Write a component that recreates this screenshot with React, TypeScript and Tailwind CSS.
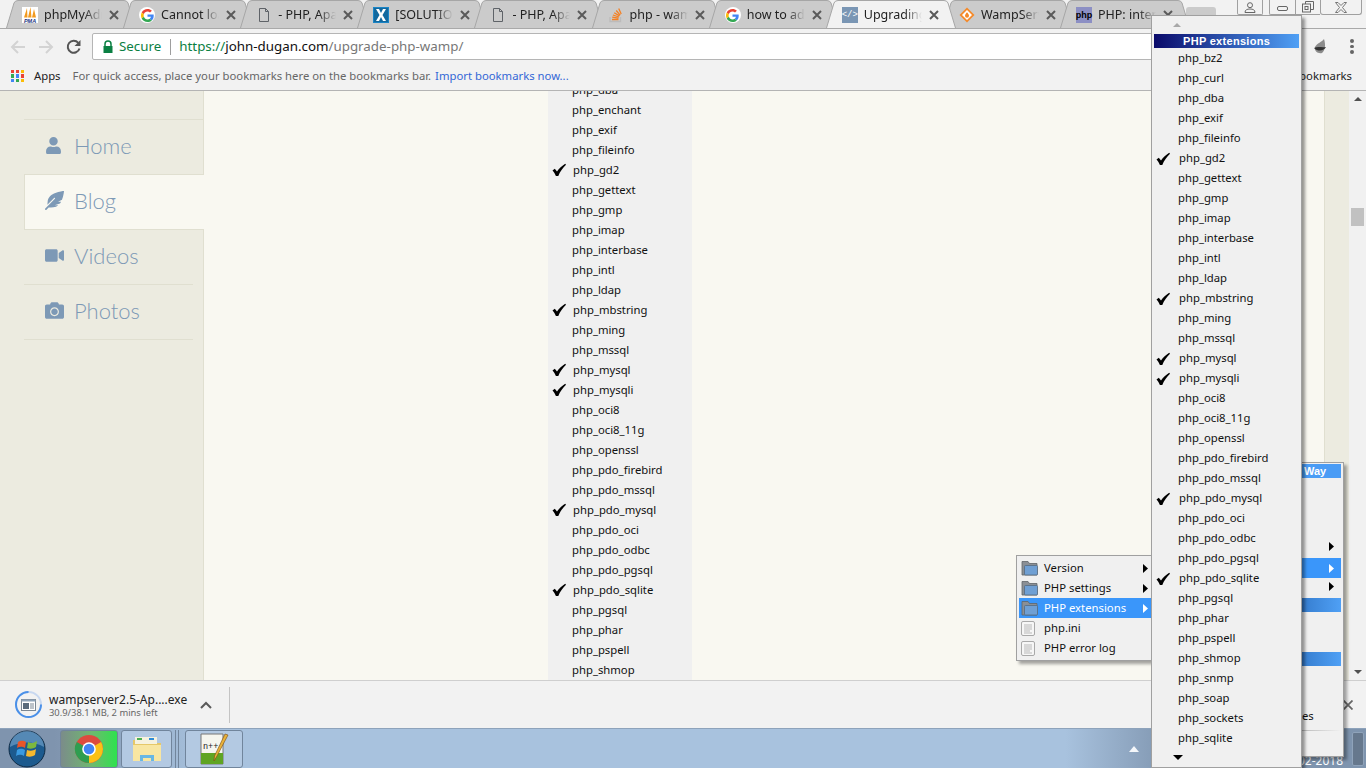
import { FaUser, FaFeatherAlt, FaVideo, FaCamera } from "react-icons/fa";
import { ReactNode } from "react";

const checked = ["php_gd2", "php_mbstring", "php_mysql", "php_mysqli", "php_pdo_mysql", "php_pdo_sqlite"];

const pageList = ["php_dba", "php_enchant", "php_exif", "php_fileinfo", "php_gd2", "php_gettext", "php_gmp", "php_imap", "php_interbase", "php_intl", "php_ldap", "php_mbstring", "php_ming", "php_mssql", "php_mysql", "php_mysqli", "php_oci8", "php_oci8_11g", "php_openssl", "php_pdo_firebird", "php_pdo_mssql", "php_pdo_mysql", "php_pdo_oci", "php_pdo_odbc", "php_pdo_pgsql", "php_pdo_sqlite", "php_pgsql", "php_phar", "php_pspell", "php_shmop"];

const menuList = ["php_bz2", "php_curl", "php_dba", "php_exif", "php_fileinfo", "php_gd2", "php_gettext", "php_gmp", "php_imap", "php_interbase", "php_intl", "php_ldap", "php_mbstring", "php_ming", "php_mssql", "php_mysql", "php_mysqli", "php_oci8", "php_oci8_11g", "php_openssl", "php_pdo_firebird", "php_pdo_mssql", "php_pdo_mysql", "php_pdo_oci", "php_pdo_odbc", "php_pdo_pgsql", "php_pdo_sqlite", "php_pgsql", "php_phar", "php_pspell", "php_shmop", "php_snmp", "php_soap", "php_sockets", "php_sqlite"];

function Tick() {
  return (
    <svg width="14" height="14" viewBox="0 0 14 14" className="shrink-0">
      <path d="M.5 7.500 L2.800 5.800 L5 8.600 C7 5.500 10 2.800 13.200 .8 L14 1.800 C10.800 4.800 8 8.800 6.300 13 L3.900 13 C3 10.800 2 9 .5 7.500 Z" fill="#000" />
    </svg>
  );
}

function GoogleIcon() {
  return (
    <div className="w-[16px] h-[16px] rounded-full bg-white flex items-center justify-center">
      <svg width="13" height="13" viewBox="0 0 48 48">
        <path fill="#EA4335" d="M24 9.500c3.500 0 6.700 1.200 9.200 3.600l6.900-6.900C35.900 2.400 30.500 0 24 0 14.600 0 6.500 5.400 2.600 13.200l8 6.200C12.500 13.600 17.800 9.500 24 9.500z" />
        <path fill="#4285F4" d="M46.900 24.500c0-1.600-.1-3.100-.4-4.500H24v9h12.900c-.6 3-2.200 5.500-4.700 7.200l7.700 6c4.500-4.200 7-10.300 7-17.700z" />
        <path fill="#FBBC05" d="M10.600 28.600c-.5-1.400-.8-3-.8-4.600s.3-3.200.8-4.600l-8-6.200C.9 16.500 0 20.100 0 24s.9 7.500 2.600 10.800l8-6.200z" />
        <path fill="#34A853" d="M24 48c6.500 0 11.900-2.100 15.900-5.800l-7.700-6c-2.100 1.400-4.900 2.300-8.200 2.300-6.200 0-11.500-4.200-13.400-9.800l-8 6.200C6.500 42.600 14.600 48 24 48z" />
      </svg>
    </div>
  );
}

function PageIcon() {
  return (
    <svg width="16" height="16" viewBox="0 0 16 16" fill="none">
      <path d="M3.500 1.500h6l3 3v10h-9z M9.500 1.500v3h3" stroke="#5f6368" strokeWidth="1" />
    </svg>
  );
}

function PmaIcon() {
  return (
    <svg width="16" height="16" viewBox="0 0 16 16">
      <rect width="16" height="16" fill="#fff" />
      <path d="M2 10.500 L5 1 L5.500 10.500 Z M6 10.500 L8.500 0 L9.500 10.500 Z M10 10.500 L12 2 L14 10.500 Z" fill="#f29a1f" />
      <text x="8" y="15.500" textAnchor="middle" fontSize="5.500" fontWeight="bold" fontStyle="italic" fill="#24357f" fontFamily="Liberation Sans, sans-serif">PMA</text>
    </svg>
  );
}

function SolutionIcon() {
  return (
    <svg width="16" height="16" viewBox="0 0 16 16">
      <rect width="16" height="16" fill="#1b85c6" />
      <rect x="1" y="1" width="14" height="14" fill="#12699f" />
      <path d="M3 2h3l2 4 2-4h3L9.500 8 13 14h-3L8 10l-2 4H3l3.500-6z" fill="#fff" />
    </svg>
  );
}

function StackIcon() {
  return (
    <svg width="16" height="16" viewBox="0 0 16 16" fill="none">
      <path d="M2 10v4.500h10.500V10" stroke="#bcbbbb" strokeWidth="1.300" />
      <path d="M4 12.500h6.500 M4.200 10.200l6.300.9 M4.900 8l6 2 M6.200 5.700l5.300 3.200 M8.200 3.500l4 4.700 M10.700 1.500l2.500 5.600" stroke="#f48024" strokeWidth="1.300" />
    </svg>
  );
}

function CodeIcon() {
  return (
    <div className="w-[16px] h-[16px] bg-[#7a96b4] flex items-center justify-center text-white text-[9px] leading-none font-['Liberation_Mono',monospace]">
      &lt;/&gt;
    </div>
  );
}

function WampIcon() {
  return (
    <svg width="16" height="16" viewBox="0 0 16 16">
      <path d="M8 .5 15.500 8 8 15.500 .5 8z" fill="#f58a2a" />
      <path d="M8 3 13 8 8 13 3 8z" fill="#fff" />
      <path d="M8 5.200c1.300 1.500 2 2.500 2 3.500a2 2 0 0 1-4 0c0-1 .7-2 2-3.500z" fill="#f58a2a" />
    </svg>
  );
}

function PhpIcon() {
  return (
    <div className="w-[16px] h-[16px] bg-[#8c8fc4] flex items-center justify-center text-black text-[9px] leading-none font-['Liberation_Sans',sans-serif] font-bold">
      php
    </div>
  );
}

const tabs: { icon: ReactNode; title: string; active?: boolean }[] = [
  { icon: <PmaIcon />, title: "phpMyAdmin" },
  { icon: <GoogleIcon />, title: "Cannot load" },
  { icon: <PageIcon />, title: "- PHP, Apache" },
  { icon: <SolutionIcon />, title: "[SOLUTION]" },
  { icon: <PageIcon />, title: "- PHP, Apache" },
  { icon: <StackIcon />, title: "php - wamp" },
  { icon: <GoogleIcon />, title: "how to add" },
  { icon: <CodeIcon />, title: "Upgrading PHP", active: true },
  { icon: <WampIcon />, title: "WampServer" },
  { icon: <PhpIcon />, title: "PHP: internal" },
];

function Tab({ icon, title, active }: { icon: ReactNode; title: string; active?: boolean }) {
  return (
    <div className={`relative h-[28px] w-[130px] mr-[-12.9px] shrink-0 flex items-center pl-[16px] pt-[2px] ${active ? "z-10" : ""}`}>
      <svg className="absolute inset-0" width="130" height="28" viewBox="0 0 130 28">
        <path d="M0.500 28 L8 3 Q9 .500 12 .500 L118 .500 Q121 .500 122 3 L129.500 28" fill={active ? "#f2f2f2" : "#cbcbcb"} stroke="#a6a6a6" />
      </svg>
      <div className="relative w-[16px] h-[16px] shrink-0">{icon}</div>
      <div className="relative ml-[6px] w-[58px] overflow-hidden whitespace-nowrap text-[12.5px] text-[#222] [mask-image:linear-gradient(to_right,black_70%,transparent)]">
        {title}
      </div>
      <svg className="relative ml-[7px]" width="10" height="10" viewBox="0 0 10 10">
        <path d="M1 1 L9 9 M9 1 L1 9" stroke="#5a5a5a" strokeWidth="2" />
      </svg>
    </div>
  );
}

function AppsGrid() {
  const colors = ["#ea4335", "#ea4335", "#fbbc05", "#34a853", "#4285f4", "#ea4335", "#4285f4", "#34a853", "#fbbc05"];
  return (
    <div className="grid grid-cols-3 gap-[1.500px] w-[13px]">
      {colors.map((c, i) => (
        <div key={i} className="w-[3.330px] h-[3.330px]" style={{ background: c }} />
      ))}
    </div>
  );
}

function FolderIcon() {
  return (
    <svg width="17" height="16" viewBox="0 0 17 16">
      <path d="M1 1.500 h6 l1.500 2 H16 V15 H1 z" fill="#8a8f95" stroke="#5f6468" strokeWidth=".8" />
      <rect x="3.500" y="5.500" width="13" height="9.500" rx="1" fill="#6f9fd3" stroke="#56697f" strokeWidth=".8" />
    </svg>
  );
}

function DocIcon() {
  return (
    <svg width="14" height="15" viewBox="0 0 14 15">
      <rect x=".5" y=".5" width="13" height="14" rx="1.500" fill="#f6f6f6" stroke="#a9a9a9" />
      <path d="M3 4h8 M3 6h8 M3 8h8 M3 10h6 M3 12h8" stroke="#b9b9b9" />
    </svg>
  );
}

function Arrow({ color = "#000" }: { color?: string }) {
  return (
    <svg width="5" height="9" viewBox="0 0 5 9">
      <path d="M0 0 L5 4.500 L0 9 Z" fill={color} />
    </svg>
  );
}

function LeftMenuRow({ icon, label, arrow, active }: { icon: ReactNode; label: string; arrow?: boolean; active?: boolean }) {
  return (
    <div className={`h-[20px] flex items-center pl-[2px] pr-[3px] ${active ? "bg-[#3a96fa] text-white" : "text-[#111]"}`}>
      <div className="w-[23px] flex items-center justify-start shrink-0">{icon}</div>
      <span className="flex-1">{label}</span>
      {arrow && <Arrow color={active ? "#fff" : "#000"} />}
    </div>
  );
}

function PhpRow({ name, left }: { name: string; left: string }) {
  const on = checked.includes(name);
  return (
    <div className="h-[20px] flex items-center text-[#111] whitespace-nowrap">
      <div className={`${left} shrink-0 pl-[4px] flex items-center`}>{on && <Tick />}</div>
      <span className={on ? "ml-[1px]" : ""}>{name}</span>
    </div>
  );
}

const navItems = [
  { icon: <FaUser size={17} />, label: "Home" },
  { icon: <FaFeatherAlt size={19} />, label: "Blog", active: true },
  { icon: <FaVideo size={19} />, label: "Videos" },
  { icon: <FaCamera size={19} />, label: "Photos" },
];

export default function App() {
  return (
    <div className="relative w-[1366px] h-[768px] overflow-hidden flex flex-col bg-[#f2f2f2] font-['Noto_Sans',sans-serif]">
      {/* tab strip */}
      <div className="relative h-[29px] shrink-0 flex pl-[6px] border-b border-[#a9a9a9]">
        {tabs.map((t, i) => (
          <Tab key={i} {...t} />
        ))}
        <div className="ml-[9px] mt-[7px] w-[30px] h-[21px] bg-[#cbcbcb] rounded-t-[3px]" />
        <div className="ml-auto flex h-[15px] items-start">
          <div className="w-[26px] h-[15px] border-x border-b border-[#a0a0a0] rounded-b-[2px] flex items-center justify-center mr-[6px]">
            <svg width="12" height="11" viewBox="0 0 12 11" fill="none">
              <circle cx="6" cy="3.200" r="2.500" stroke="#666" />
              <path d="M1 10.500 C1 7.800 3 7 6 7 C9 7 11 7.800 11 10.500 Z" stroke="#666" />
            </svg>
          </div>
          <div className="w-[26px] h-[15px] border-l border-b border-[#a0a0a0] rounded-bl-[2px] flex items-center justify-center">
            <div className="w-[11px] h-[5px] mt-[3px] border border-[#666] rounded-[2px]" />
          </div>
          <div className="w-[25px] h-[15px] border-l border-b border-[#a0a0a0] flex items-center justify-center">
            <svg width="12" height="12" viewBox="0 0 12 12" fill="none">
              <path d="M3.500 3V.5h8v8H9" stroke="#666" />
              <rect x=".5" y="3" width="8" height="8" stroke="#666" />
              <rect x="3" y="5.500" width="3" height="3" stroke="#666" />
            </svg>
          </div>
          <div className="w-[42px] h-[15px] mr-[4px] border-x border-b border-[#a0a0a0] rounded-b-[3px] flex items-center justify-center">
            <svg width="12" height="11" viewBox="0 0 12 11" fill="none">
              <path d="M.5 .5h2.500L6 3.500 9 .5h2.500L7.500 5.500l4 5H9L6 7.500 3 10.500H.5l4-5z" stroke="#777" fill="#f2f2f2" />
            </svg>
          </div>
        </div>
      </div>

      {/* toolbar */}
      <div className="h-[33px] shrink-0 flex items-center pl-[10px] pt-[2px]">
        <svg width="16" height="16" viewBox="0 0 16 16" fill="none" className="mr-[12px]">
          <path d="M15 8H2 M8 2 L2 8 L8 14" stroke="#d3d3d3" strokeWidth="2" />
        </svg>
        <svg width="16" height="16" viewBox="0 0 16 16" fill="none" className="mr-[12px]">
          <path d="M1 8H14 M8 2 L14 8 L8 14" stroke="#d3d3d3" strokeWidth="2" />
        </svg>
        <svg width="16" height="16" viewBox="0 0 16 16" fill="none" className="mr-[10px]">
          <path d="M13.500 9.500A6 6 0 1 1 12.300 3.800" stroke="#555" strokeWidth="2" />
          <path d="M14.500 1v6h-6z" fill="#555" />
        </svg>
        <div className="h-[27px] w-[1204px] bg-white border border-[#b5b5b5] rounded-[2px] flex items-center pl-[9px] text-[13.35px] whitespace-nowrap">
          <svg width="12" height="14" viewBox="0 0 12 14" className="mr-[5px]">
            <path d="M3 6V4a3 3 0 0 1 6 0v2" fill="none" stroke="#0b8043" strokeWidth="1.500" />
            <rect x="1.500" y="6" width="9" height="7" fill="#0b8043" />
          </svg>
          <span className="text-[#0b8043]">Secure</span>
          <div className="w-px h-[16px] bg-[#9e9e9e] ml-[9px] mr-[8px]" />
          <span className="text-[#0b8043]">https://</span>
          <span className="text-[#111]">john-dugan.com</span>
          <span className="text-[#777]">/upgrade-php-wamp/</span>
        </div>
        <svg width="20" height="20" viewBox="0 0 20 20" className="ml-[14px]">
          <path d="M14 2 C12 5 7 6 5 10 C4 14 8 17 12 16 C15 14 16 8 14 2 Z" fill="#8c8c8c" />
          <path d="M4 11 C8 9 12 11 16 10 C14 14 8 15 4 11 Z" fill="#333" />
        </svg>
        <div className="ml-[20px] flex flex-col gap-[2px]">
          <div className="w-[3.500px] h-[3.500px] rounded-full bg-[#666]" />
          <div className="w-[3.500px] h-[3.500px] rounded-full bg-[#666]" />
          <div className="w-[3.500px] h-[3.500px] rounded-full bg-[#666]" />
        </div>
      </div>

      {/* bookmarks bar */}
      <div className="h-[29px] shrink-0 flex items-center pl-[11px] pr-[14px] text-[11.3px] border-b border-[#b4b4b4] whitespace-nowrap">
        <AppsGrid />
        <span className="ml-[10px] text-[#222]">Apps</span>
        <span className="ml-[12px] text-[#666]">For quick access, place your bookmarks here on the bookmarks bar.</span>
        <span className="ml-[4px] text-[#3367d6]">Import bookmarks now...</span>
        <span className="ml-auto text-[#222]">Other bookmarks</span>
      </div>

      {/* page */}
      <div className="flex-1 min-h-0 flex bg-[#f9f8f1] overflow-hidden">
        <div className="w-[204px] shrink-0 bg-[#ecebe0] border-r border-[#e0dfd0] pl-[24px] pt-[28px]">
          <div className="border-t border-[#e0dfd0]">
            {navItems.map((n) => (
              <div
                key={n.label}
                className={`flex items-center pb-[3px] text-[#7d99b6] text-[22px] font-['Lato',sans-serif] font-light ${
                  n.active
                    ? "h-[56px] mt-[-1px] pl-[20px] w-[180px] bg-[#f9f8f1] border-l border-y border-[#e0dfd0]"
                    : "h-[55px] pl-[21px] w-[169px] border-b border-[#e0dfd0]"
                }`}
              >
                <div className="w-[29px] shrink-0">{n.icon}</div>
                <span>{n.label}</span>
              </div>
            ))}
          </div>
        </div>

        <div className="ml-[344px] w-[144px] h-full overflow-hidden bg-[#f0f0f0] text-[11.3px]">
          <div className="mt-[-11px]">
            {pageList.map((p) => (
              <PhpRow key={p} name={p} left="w-[24px]" />
            ))}
          </div>
        </div>

        <div className="ml-auto w-[25px] bg-[#ecebe0] border-l border-[#e0dfd0]" />
        <div className="relative w-[17px] bg-[#f1f1f1] flex flex-col items-center justify-between py-[6px]">
          <div className="w-0 h-0 border-x-[4px] border-x-transparent border-b-[4px] border-b-[#505050]" />
          <div className="absolute top-[117px] left-[2px] w-[13px] h-[18px] bg-[#c1c1c1]" />
          <div className="w-0 h-0 border-x-[4px] border-x-transparent border-t-[4px] border-t-[#505050]" />
        </div>
      </div>

      {/* download shelf */}
      <div className="h-[48px] shrink-0 flex items-center bg-[#f2f2f2] border-t border-[#cfcfcf] pl-[15px] pr-[13px]">
        <div className="relative w-[27px] h-[27px] rounded-full border-[2px] border-[#c8d8f0] flex items-center justify-center">
          <svg className="absolute -inset-[2px]" width="27" height="27" viewBox="0 0 27 27" fill="none">
            <path d="M13.500 1 A12.500 12.500 0 1 0 26 13.500" stroke="#4a90e8" strokeWidth="2" />
          </svg>
          <svg width="15" height="12" viewBox="0 0 15 12">
            <rect x=".5" y=".5" width="14" height="11" fill="#fff" stroke="#7a8794" />
            <rect x=".5" y=".5" width="14" height="2" fill="#8fa3b8" />
            <rect x="2" y="4" width="6" height="6" fill="#5a6b7c" />
            <path d="M9 5h4 M9 7h4 M9 9h4" stroke="#7a8794" />
          </svg>
        </div>
        <div className="ml-[7px] w-[146px] whitespace-nowrap pt-[3px]">
          <div className="text-[12px] leading-[14px] text-[#222]">wampserver2.5-Ap....exe</div>
          <div className="text-[9.4px] leading-[12px] text-[#666]">30.9/38.1 MB, 2 mins left</div>
        </div>
        <svg width="12" height="8" viewBox="0 0 12 8" fill="none" className="ml-[5px]">
          <path d="M1 7 L6 2 L11 7" stroke="#5a5a5a" strokeWidth="2" />
        </svg>
        <div className="ml-[17px] w-px h-[36px] bg-[#c4c4c4]" />
        <svg width="10" height="10" viewBox="0 0 10 10" className="ml-auto">
          <path d="M.5 .5 L9.500 9.500 M9.500 .5 L.5 9.500" stroke="#666" strokeWidth="1.800" />
        </svg>
      </div>

      {/* taskbar */}
      <div className="h-[40px] shrink-0 flex items-center bg-[linear-gradient(to_right,#7f94ae_0%,#7f94ae_4%,#a8c2de_15%,#a8c2de_78%,#7e94ae_86%,#7e94ae_100%)] border-t border-[#8ea3bb]">
        <div className="w-[60px] pl-[8px]">
          <svg width="38" height="38" viewBox="0 0 38 38">
            <circle cx="19" cy="19" r="18" fill="#1c5a8e" stroke="#0e2a44" />
            <path d="M2 17 A17 16 0 0 1 36 17 C26 11 12 11 2 17 Z" fill="#9cc4e4" opacity=".45" />
            <path d="M10 12 C13 10 16 11 18 12 L17 18 C15 17 12 16 9 18 Z" fill="#e8562a" />
            <path d="M20 12 C23 14 26 13 29 11 L28 17 C25 19 22 19 19 18 Z" fill="#7cb83e" />
            <path d="M9 20 C12 18 15 19 17 20 L16 26 C14 25 11 24 8 26 Z" fill="#3a9ae0" />
            <path d="M19 20 C22 21 25 21 28 19 L27 25 C24 27 21 27 18 26 Z" fill="#f5b82e" />
          </svg>
        </div>
        <div className="w-[58px] h-[38px] rounded-[3px] border border-[#71859c] bg-[linear-gradient(to_right,#7b8c8a,#6fb96f_55%,#2ee24e)] flex items-center justify-center">
          <svg width="30" height="30" viewBox="0 0 30 30">
            <circle cx="15" cy="15" r="14" fill="#dd4b3e" />
            <path d="M15 15 L2.800 8 A14 14 0 0 0 15 29 Z" fill="#2f9e50" />
            <path d="M15 15 L15 29 A14 14 0 0 0 27.100 8 Z" fill="#fbc116" />
            <circle cx="15" cy="15" r="6.800" fill="#fff" />
            <circle cx="15" cy="15" r="5.300" fill="#4285f4" />
          </svg>
        </div>
        <div className="ml-[3px] w-[51px] h-[38px] rounded-[3px] border border-[#71859c] bg-[#b3c9e2] flex items-center justify-center">
          <svg width="32" height="28" viewBox="0 0 32 28">
            <path d="M2 5 h11 l2 3 h15 v18 H2 z" fill="#e6c869" />
            <rect x="4" y="2" width="22" height="7" fill="#f6f2df" />
            <rect x="6" y="3" width="5" height="2" fill="#4caf50" />
            <rect x="18" y="3" width="5" height="2" fill="#2e8bd6" />
            <path d="M2 10 h28 v16 H2 z" fill="#f8e6a2" />
            <path d="M9 20 h14 v6 h-3 v-3 h-8 v3 H9 z" fill="#68b7e4" />
          </svg>
        </div>
        <div className="ml-[3px] w-[4px] h-[38px] border-x border-[#71859c]" />
        <div className="ml-[6px] w-[58px] h-[38px] rounded-[3px] border border-[#71859c] bg-[#b3c9e2] flex items-center justify-center">
          <svg width="32" height="34" viewBox="0 0 32 34">
            <path d="M3 2 h22 v30 H3 z" fill="#f5f5ee" stroke="#777" />
            <path d="M3 21 h22 v11 H3 z" fill="#5fa423" />
            <text x="5" y="17" fontSize="8.500" fontFamily="Liberation Mono, monospace" fill="#222">n++</text>
            <path d="M30 3 L19 24 L16 29 L16.500 24 L27 2 Z" fill="#e8b23a" stroke="#7a4a12" strokeWidth=".6" />
          </svg>
        </div>
        <svg width="12" height="7" viewBox="0 0 12 7" className="ml-[885px]">
          <path d="M1 7 L6 1 L11 7 Z" fill="#f4f7fa" />
        </svg>
        <span className="ml-[158px] mt-[24px] text-[12px] text-white whitespace-nowrap">02-2018</span>
        <div className="ml-auto mr-[2px] w-[12px] h-[34px] rounded-[2px] border border-[#8fa3ba] bg-[#66788d]" />
      </div>

      {/* wamp tray menu behind the submenus */}
      <div className="absolute left-[1290px] top-[462px] w-[54px] h-[295px] bg-[#f0f0f0] border border-[#a0a0a0] shadow-[3px_3px_3px_rgba(0,0,0,0.35)] text-[11.3px] text-[#111]">
        <div className="mt-[1px] h-[14px] ml-[2px] mr-[2px] bg-[#4a9cf5] text-white font-bold text-[11px] leading-[14px] pl-[11px] font-['Liberation_Sans',sans-serif]">Way</div>
        <div className="absolute right-[9px] top-[79px]"><Arrow /></div>
        <div className="absolute left-0 right-[2px] top-[95px] h-[20px] bg-[#3a96fa] flex items-center justify-end pr-[7px]"><Arrow color="#fff" /></div>
        <div className="absolute right-[9px] top-[119px]"><Arrow /></div>
        <div className="absolute left-0 right-[2px] top-[135px] h-[14px] bg-[linear-gradient(to_right,#2f73c4,#4fa0f5)]" />
        <div className="absolute left-0 right-[2px] top-[189px] h-[14px] bg-[linear-gradient(to_right,#2f73c4,#4fa0f5)]" />
        <div className="absolute left-[11px] top-[244px] leading-[17px]">es</div>
        <div className="absolute left-0 right-[2px] top-[267px] h-px bg-[linear-gradient(to_right,#aaa,#f0f0f0)]" />
      </div>

      {/* php submenu */}
      <div className="absolute left-[1016px] top-[555px] w-[136px] h-[106px] bg-[#f0f0f0] border border-[#a0a0a0] shadow-[3px_3px_3px_rgba(0,0,0,0.35)] text-[11.3px] pt-[2px] pl-[2px]">
        <LeftMenuRow icon={<FolderIcon />} label="Version" arrow />
        <LeftMenuRow icon={<FolderIcon />} label="PHP settings" arrow />
        <LeftMenuRow icon={<FolderIcon />} label="PHP extensions" arrow active />
        <LeftMenuRow icon={<DocIcon />} label="php.ini" />
        <LeftMenuRow icon={<DocIcon />} label="PHP error log" />
      </div>

      {/* php extensions menu */}
      <div className="absolute left-[1151px] top-[15px] w-[151px] h-[753px] bg-[#f0f0f0] border border-[#a0a0a0] shadow-[3px_3px_3px_rgba(0,0,0,0.4)] text-[11.3px] flex flex-col">
        <div className="h-[18px] flex items-center pl-[21px]">
          <div className="w-0 h-0 border-x-[4px] border-x-transparent border-b-[4px] border-b-[#a8a8a8]" />
        </div>
        <div className="mx-[2px] h-[14px] shrink-0 bg-[linear-gradient(to_right,#0a0a6a,#4fa0f5)] text-white font-bold text-[11px] leading-[14px] pl-[29px] font-['Liberation_Sans',sans-serif] tracking-[0.3px]">
          PHP extensions
        </div>
        <div className="pt-[1px]">
          {menuList.map((m) => (
            <PhpRow key={m} name={m} left="w-[26px]" />
          ))}
        </div>
        <div className="h-[19px] flex items-center pl-[21px]">
          <div className="w-0 h-0 border-x-[5px] border-x-transparent border-t-[5px] border-t-black" />
        </div>
      </div>
    </div>
  );
}
